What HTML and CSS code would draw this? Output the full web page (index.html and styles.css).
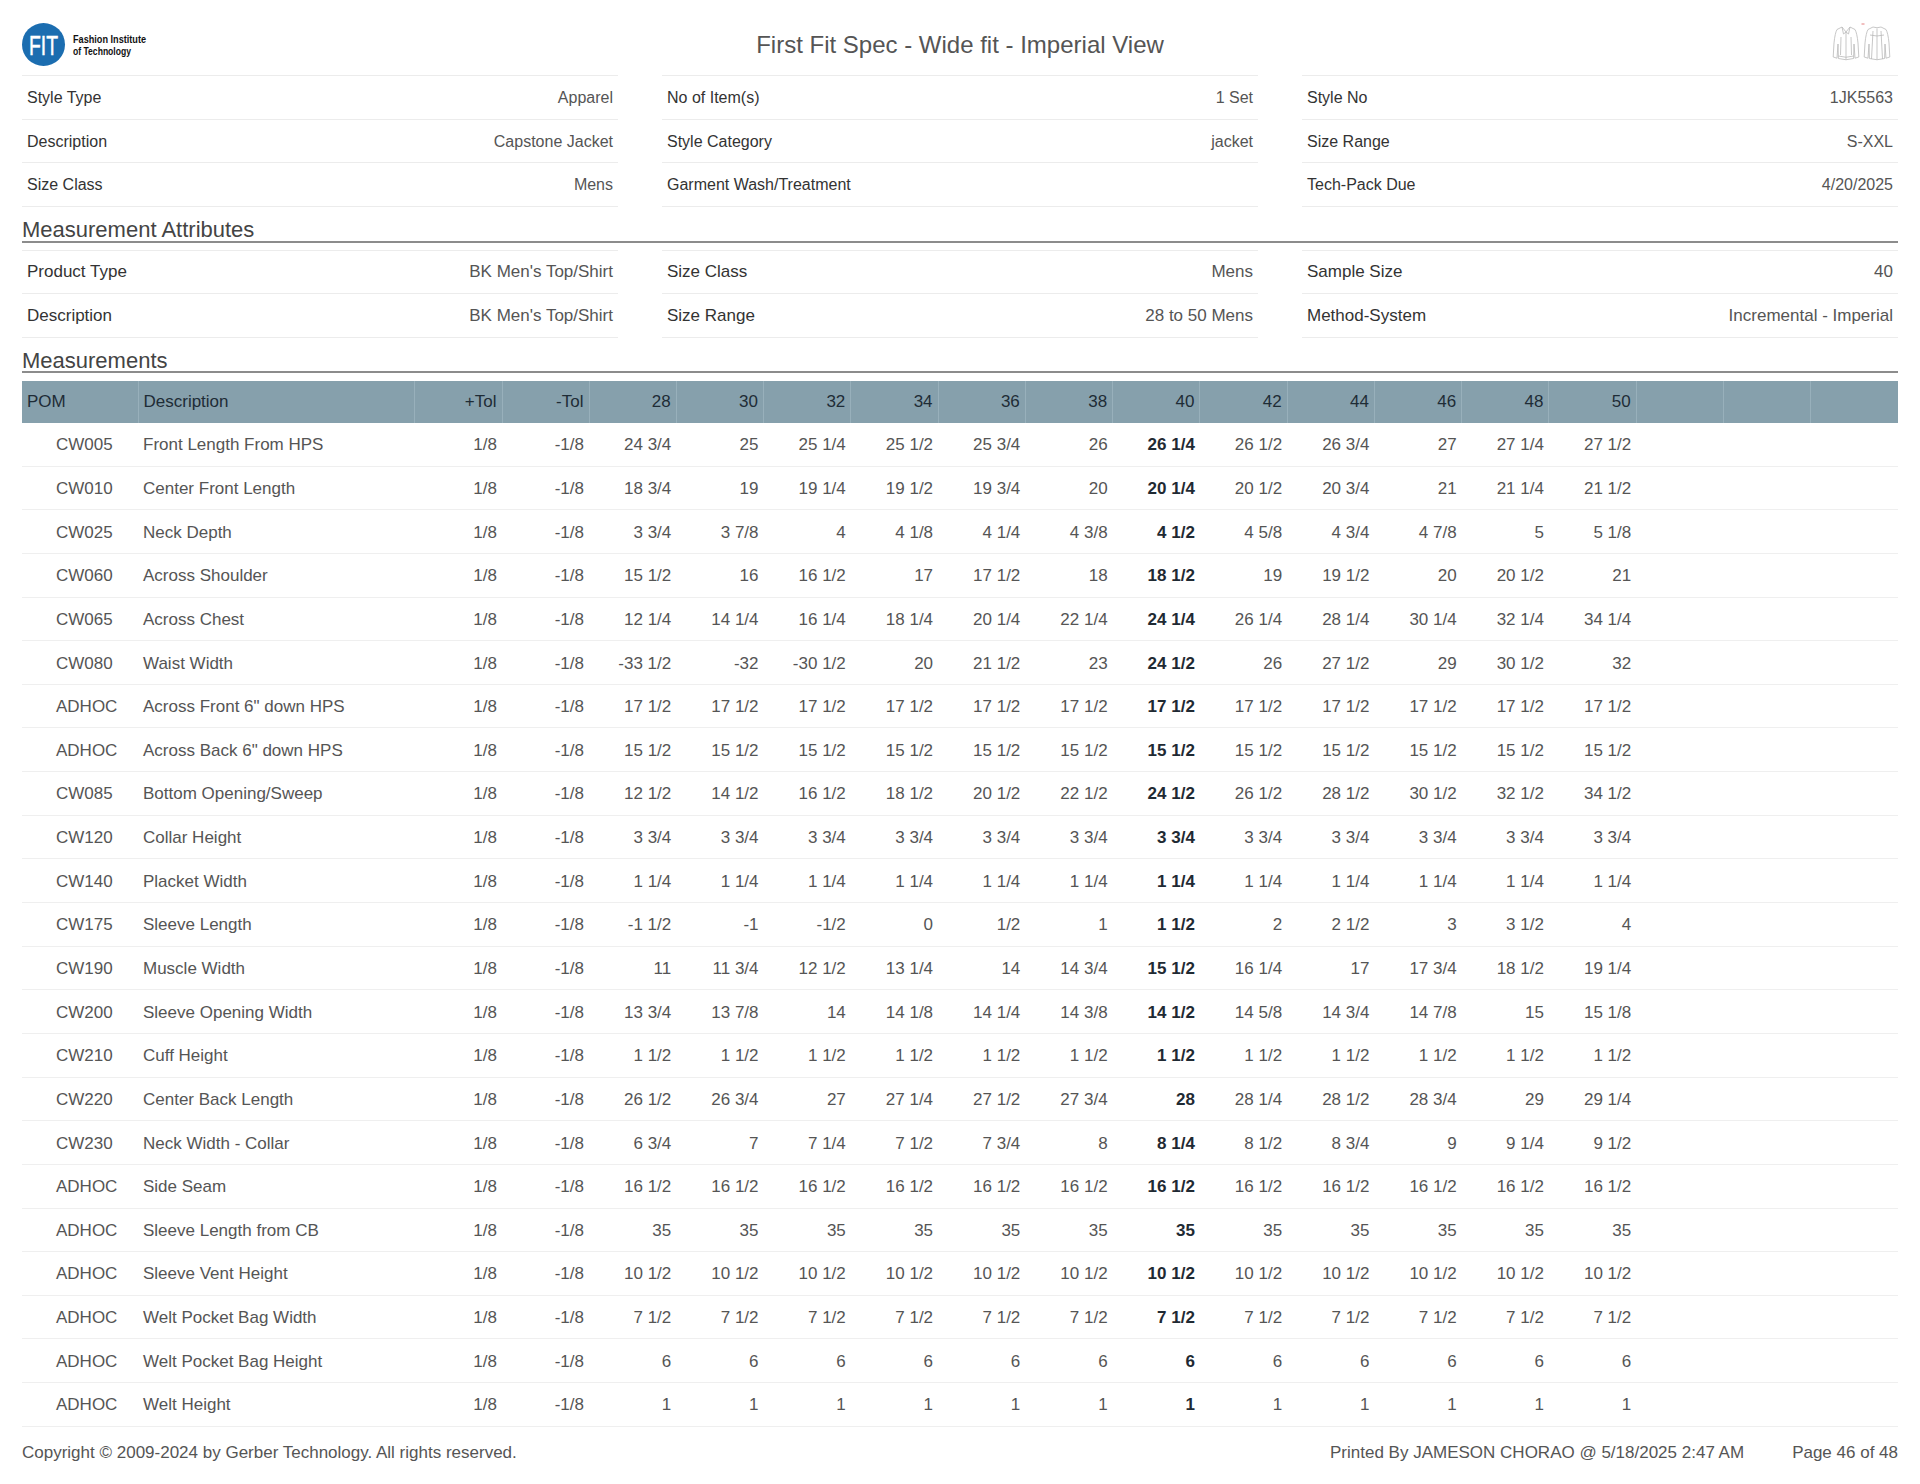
FILE: index.html
```html
<!DOCTYPE html>
<html lang="en">
<head>
<meta charset="utf-8">
<title>First Fit Spec - Wide fit - Imperial View</title>
<link rel="stylesheet" href="styles.css">
</head>
<body>
<div class="page">
  <header class="top">
    <div class="logo">
      <svg width="150" height="46" viewBox="0 0 150 46">
        <circle cx="21.5" cy="22.5" r="21.5" fill="#1b6db0"/>
        <text x="7" y="32.5" fill="#fff" stroke="#fff" stroke-width="0.5" font-family="Liberation Sans, Arial, sans-serif" font-size="28" textLength="29" lengthAdjust="spacingAndGlyphs">FIT</text>
        <text x="51" y="21" fill="#111" font-family="Liberation Sans, Arial, sans-serif" font-weight="bold" font-size="10.5" textLength="73" lengthAdjust="spacingAndGlyphs">Fashion Institute</text>
        <text x="51" y="32.5" fill="#111" font-family="Liberation Sans, Arial, sans-serif" font-weight="bold" font-size="10.5" textLength="58" lengthAdjust="spacingAndGlyphs">of Technology</text>
      </svg>
    </div>
    <h1 class="title">First Fit Spec - Wide fit - Imperial View</h1>
    <div class="sketch">
      <svg width="64" height="40" viewBox="0 0 64 40" fill="none" stroke="#b9b9b9" stroke-width="0.8" stroke-linejoin="round">
        <path d="M10 5 L5 7.5 Q3 11 2 21 L1.2 35 L5 36.2 L6 22 L6.4 36.5 Q14 39 21.6 36.5 L22 22 L23 36.2 L26.8 35 L26 21 Q25 11 23 7.5 L18 5"/>
        <path d="M10 5 L14 10 L18 5 M10 5 L11.5 12 L14 10 L16.5 12 L18 5 M14 10 L14 37.5 M9 15 L8.5 33 M19 15 L19.5 33 M6.4 34 Q14 36.5 21.6 34"/>
        <path d="M41 5 L36 7.5 Q34 11 33 21 L32.2 35 L36 36.2 L37 22 L37.4 36.5 Q45 39 52.6 36.5 L53 22 L54 36.2 L57.8 35 L57 21 Q56 11 54 7.5 L49 5 Q45 6.5 41 5"/>
        <path d="M45 6.5 L45 37.5 M41 9 L39.5 37 M49 9 L50.5 37 M38 13 Q45 15 52 13"/>
        <path d="M29.5 2 L32.5 2" stroke="#e07070" stroke-width="0.9"/>
      </svg>
    </div>
  </header>

  <section class="info">
    <div class="col">
      <div class="kv"><span class="k">Style Type</span><span class="v">Apparel</span></div>
      <div class="kv"><span class="k">Description</span><span class="v">Capstone Jacket</span></div>
      <div class="kv"><span class="k">Size Class</span><span class="v">Mens</span></div>
    </div>
    <div class="col">
      <div class="kv"><span class="k">No of Item(s)</span><span class="v">1 Set</span></div>
      <div class="kv"><span class="k">Style Category</span><span class="v">jacket</span></div>
      <div class="kv"><span class="k">Garment Wash/Treatment</span><span class="v"></span></div>
    </div>
    <div class="col">
      <div class="kv"><span class="k">Style No</span><span class="v">1JK5563</span></div>
      <div class="kv"><span class="k">Size Range</span><span class="v">S-XXL</span></div>
      <div class="kv"><span class="k">Tech-Pack Due</span><span class="v">4/20/2025</span></div>
    </div>
  </section>

  <h2 class="sec">Measurement Attributes</h2>

  <section class="info attrs">
    <div class="col">
      <div class="kv"><span class="k">Product Type</span><span class="v">BK Men's Top/Shirt</span></div>
      <div class="kv"><span class="k">Description</span><span class="v">BK Men's Top/Shirt</span></div>
    </div>
    <div class="col">
      <div class="kv"><span class="k">Size Class</span><span class="v">Mens</span></div>
      <div class="kv"><span class="k">Size Range</span><span class="v">28 to 50 Mens</span></div>
    </div>
    <div class="col">
      <div class="kv"><span class="k">Sample Size</span><span class="v">40</span></div>
      <div class="kv"><span class="k">Method-System</span><span class="v">Incremental - Imperial</span></div>
    </div>
  </section>

  <h2 class="sec sec2">Measurements</h2>

  <table class="meas">
    <colgroup>
      <col class="c-pom"><col class="c-desc"><col class="c-tol"><col class="c-tol2">
      <col class="c-sz"><col class="c-sz"><col class="c-sz"><col class="c-sz"><col class="c-sz">
      <col class="c-sz"><col class="c-sz"><col class="c-sz"><col class="c-sz"><col class="c-sz">
      <col class="c-sz"><col class="c-sz"><col class="c-sz"><col class="c-sz"><col class="c-sz">
    </colgroup>
    <thead>
      <tr>
        <th class="l">POM</th><th class="l">Description</th><th>+Tol</th><th>-Tol</th>
        <th>28</th><th>30</th><th>32</th><th>34</th><th>36</th><th>38</th><th>40</th><th>42</th><th>44</th><th>46</th><th>48</th><th>50</th><th></th><th></th><th></th>
      </tr>
    </thead>
    <tbody>
      <tr><td class="pom">CW005</td><td class="desc">Front Length From HPS</td><td>1/8</td><td>-1/8</td><td>24 3/4</td><td>25</td><td>25 1/4</td><td>25 1/2</td><td>25 3/4</td><td>26</td><td class="b">26 1/4</td><td>26 1/2</td><td>26 3/4</td><td>27</td><td>27 1/4</td><td>27 1/2</td><td></td><td></td><td></td></tr>
      <tr><td class="pom">CW010</td><td class="desc">Center Front Length</td><td>1/8</td><td>-1/8</td><td>18 3/4</td><td>19</td><td>19 1/4</td><td>19 1/2</td><td>19 3/4</td><td>20</td><td class="b">20 1/4</td><td>20 1/2</td><td>20 3/4</td><td>21</td><td>21 1/4</td><td>21 1/2</td><td></td><td></td><td></td></tr>
      <tr><td class="pom">CW025</td><td class="desc">Neck Depth</td><td>1/8</td><td>-1/8</td><td>3 3/4</td><td>3 7/8</td><td>4</td><td>4 1/8</td><td>4 1/4</td><td>4 3/8</td><td class="b">4 1/2</td><td>4 5/8</td><td>4 3/4</td><td>4 7/8</td><td>5</td><td>5 1/8</td><td></td><td></td><td></td></tr>
      <tr><td class="pom">CW060</td><td class="desc">Across Shoulder</td><td>1/8</td><td>-1/8</td><td>15 1/2</td><td>16</td><td>16 1/2</td><td>17</td><td>17 1/2</td><td>18</td><td class="b">18 1/2</td><td>19</td><td>19 1/2</td><td>20</td><td>20 1/2</td><td>21</td><td></td><td></td><td></td></tr>
      <tr><td class="pom">CW065</td><td class="desc">Across Chest</td><td>1/8</td><td>-1/8</td><td>12 1/4</td><td>14 1/4</td><td>16 1/4</td><td>18 1/4</td><td>20 1/4</td><td>22 1/4</td><td class="b">24 1/4</td><td>26 1/4</td><td>28 1/4</td><td>30 1/4</td><td>32 1/4</td><td>34 1/4</td><td></td><td></td><td></td></tr>
      <tr><td class="pom">CW080</td><td class="desc">Waist Width</td><td>1/8</td><td>-1/8</td><td>-33 1/2</td><td>-32</td><td>-30 1/2</td><td>20</td><td>21 1/2</td><td>23</td><td class="b">24 1/2</td><td>26</td><td>27 1/2</td><td>29</td><td>30 1/2</td><td>32</td><td></td><td></td><td></td></tr>
      <tr><td class="pom">ADHOC</td><td class="desc">Across Front 6" down HPS</td><td>1/8</td><td>-1/8</td><td>17 1/2</td><td>17 1/2</td><td>17 1/2</td><td>17 1/2</td><td>17 1/2</td><td>17 1/2</td><td class="b">17 1/2</td><td>17 1/2</td><td>17 1/2</td><td>17 1/2</td><td>17 1/2</td><td>17 1/2</td><td></td><td></td><td></td></tr>
      <tr><td class="pom">ADHOC</td><td class="desc">Across Back 6" down HPS</td><td>1/8</td><td>-1/8</td><td>15 1/2</td><td>15 1/2</td><td>15 1/2</td><td>15 1/2</td><td>15 1/2</td><td>15 1/2</td><td class="b">15 1/2</td><td>15 1/2</td><td>15 1/2</td><td>15 1/2</td><td>15 1/2</td><td>15 1/2</td><td></td><td></td><td></td></tr>
      <tr><td class="pom">CW085</td><td class="desc">Bottom Opening/Sweep</td><td>1/8</td><td>-1/8</td><td>12 1/2</td><td>14 1/2</td><td>16 1/2</td><td>18 1/2</td><td>20 1/2</td><td>22 1/2</td><td class="b">24 1/2</td><td>26 1/2</td><td>28 1/2</td><td>30 1/2</td><td>32 1/2</td><td>34 1/2</td><td></td><td></td><td></td></tr>
      <tr><td class="pom">CW120</td><td class="desc">Collar Height</td><td>1/8</td><td>-1/8</td><td>3 3/4</td><td>3 3/4</td><td>3 3/4</td><td>3 3/4</td><td>3 3/4</td><td>3 3/4</td><td class="b">3 3/4</td><td>3 3/4</td><td>3 3/4</td><td>3 3/4</td><td>3 3/4</td><td>3 3/4</td><td></td><td></td><td></td></tr>
      <tr><td class="pom">CW140</td><td class="desc">Placket Width</td><td>1/8</td><td>-1/8</td><td>1 1/4</td><td>1 1/4</td><td>1 1/4</td><td>1 1/4</td><td>1 1/4</td><td>1 1/4</td><td class="b">1 1/4</td><td>1 1/4</td><td>1 1/4</td><td>1 1/4</td><td>1 1/4</td><td>1 1/4</td><td></td><td></td><td></td></tr>
      <tr><td class="pom">CW175</td><td class="desc">Sleeve Length</td><td>1/8</td><td>-1/8</td><td>-1 1/2</td><td>-1</td><td>-1/2</td><td>0</td><td>1/2</td><td>1</td><td class="b">1 1/2</td><td>2</td><td>2 1/2</td><td>3</td><td>3 1/2</td><td>4</td><td></td><td></td><td></td></tr>
      <tr><td class="pom">CW190</td><td class="desc">Muscle Width</td><td>1/8</td><td>-1/8</td><td>11</td><td>11 3/4</td><td>12 1/2</td><td>13 1/4</td><td>14</td><td>14 3/4</td><td class="b">15 1/2</td><td>16 1/4</td><td>17</td><td>17 3/4</td><td>18 1/2</td><td>19 1/4</td><td></td><td></td><td></td></tr>
      <tr><td class="pom">CW200</td><td class="desc">Sleeve Opening Width</td><td>1/8</td><td>-1/8</td><td>13 3/4</td><td>13 7/8</td><td>14</td><td>14 1/8</td><td>14 1/4</td><td>14 3/8</td><td class="b">14 1/2</td><td>14 5/8</td><td>14 3/4</td><td>14 7/8</td><td>15</td><td>15 1/8</td><td></td><td></td><td></td></tr>
      <tr><td class="pom">CW210</td><td class="desc">Cuff Height</td><td>1/8</td><td>-1/8</td><td>1 1/2</td><td>1 1/2</td><td>1 1/2</td><td>1 1/2</td><td>1 1/2</td><td>1 1/2</td><td class="b">1 1/2</td><td>1 1/2</td><td>1 1/2</td><td>1 1/2</td><td>1 1/2</td><td>1 1/2</td><td></td><td></td><td></td></tr>
      <tr><td class="pom">CW220</td><td class="desc">Center Back Length</td><td>1/8</td><td>-1/8</td><td>26 1/2</td><td>26 3/4</td><td>27</td><td>27 1/4</td><td>27 1/2</td><td>27 3/4</td><td class="b">28</td><td>28 1/4</td><td>28 1/2</td><td>28 3/4</td><td>29</td><td>29 1/4</td><td></td><td></td><td></td></tr>
      <tr><td class="pom">CW230</td><td class="desc">Neck Width - Collar</td><td>1/8</td><td>-1/8</td><td>6 3/4</td><td>7</td><td>7 1/4</td><td>7 1/2</td><td>7 3/4</td><td>8</td><td class="b">8 1/4</td><td>8 1/2</td><td>8 3/4</td><td>9</td><td>9 1/4</td><td>9 1/2</td><td></td><td></td><td></td></tr>
      <tr><td class="pom">ADHOC</td><td class="desc">Side Seam</td><td>1/8</td><td>-1/8</td><td>16 1/2</td><td>16 1/2</td><td>16 1/2</td><td>16 1/2</td><td>16 1/2</td><td>16 1/2</td><td class="b">16 1/2</td><td>16 1/2</td><td>16 1/2</td><td>16 1/2</td><td>16 1/2</td><td>16 1/2</td><td></td><td></td><td></td></tr>
      <tr><td class="pom">ADHOC</td><td class="desc">Sleeve Length from CB</td><td>1/8</td><td>-1/8</td><td>35</td><td>35</td><td>35</td><td>35</td><td>35</td><td>35</td><td class="b">35</td><td>35</td><td>35</td><td>35</td><td>35</td><td>35</td><td></td><td></td><td></td></tr>
      <tr><td class="pom">ADHOC</td><td class="desc">Sleeve Vent Height</td><td>1/8</td><td>-1/8</td><td>10 1/2</td><td>10 1/2</td><td>10 1/2</td><td>10 1/2</td><td>10 1/2</td><td>10 1/2</td><td class="b">10 1/2</td><td>10 1/2</td><td>10 1/2</td><td>10 1/2</td><td>10 1/2</td><td>10 1/2</td><td></td><td></td><td></td></tr>
      <tr><td class="pom">ADHOC</td><td class="desc">Welt Pocket Bag Width</td><td>1/8</td><td>-1/8</td><td>7 1/2</td><td>7 1/2</td><td>7 1/2</td><td>7 1/2</td><td>7 1/2</td><td>7 1/2</td><td class="b">7 1/2</td><td>7 1/2</td><td>7 1/2</td><td>7 1/2</td><td>7 1/2</td><td>7 1/2</td><td></td><td></td><td></td></tr>
      <tr><td class="pom">ADHOC</td><td class="desc">Welt Pocket Bag Height</td><td>1/8</td><td>-1/8</td><td>6</td><td>6</td><td>6</td><td>6</td><td>6</td><td>6</td><td class="b">6</td><td>6</td><td>6</td><td>6</td><td>6</td><td>6</td><td></td><td></td><td></td></tr>
      <tr><td class="pom">ADHOC</td><td class="desc">Welt Height</td><td>1/8</td><td>-1/8</td><td>1</td><td>1</td><td>1</td><td>1</td><td>1</td><td>1</td><td class="b">1</td><td>1</td><td>1</td><td>1</td><td>1</td><td>1</td><td></td><td></td><td></td></tr>
    </tbody>
  </table>

  <footer class="foot">
    <span>Copyright © 2009-2024 by Gerber Technology. All rights reserved.</span>
    <span class="foot-r"><span>Printed By JAMESON CHORAO @ 5/18/2025 2:47 AM</span><span>Page 46 of 48</span></span>
  </footer>
</div>
</body>
</html>
```

FILE: styles.css
```css
html, body {
  margin: 0;
  padding: 0;
  background: #ffffff;
}

body {
  font-family: "Liberation Sans", Arial, sans-serif;
  color: #555555;
}

.page {
  padding: 0 22px;
}

/* ---------- header ---------- */
.top {
  display: grid;
  grid-template-columns: 1fr auto 1fr;
  align-items: start;
  height: 75px;
  box-sizing: border-box;
  padding-top: 22px;
}

.logo svg {
  display: block;
}

.title {
  margin: 7px 0 0 0;
  font-size: 24px;
  line-height: 32px;
  font-weight: normal;
  color: #555555;
  white-space: nowrap;
}

.sketch {
  justify-self: end;
  margin-right: 2px;
}

.sketch svg {
  display: block;
}

/* ---------- key/value grid ---------- */
.info {
  display: grid;
  grid-template-columns: repeat(3, 1fr);
  column-gap: 44px;
}

.col {
  border-bottom: 1px solid #ececec;
}

.kv {
  display: flex;
  justify-content: space-between;
  align-items: center;
  box-sizing: border-box;
  height: 43.5px;
  padding: 2px 5px 0 5px;
  border-top: 1px solid #ececec;
  font-size: 16px;
}

.kv .k {
  color: #333333;
}

.kv .v {
  color: #555555;
}

.attrs {
  margin-top: 7px;
}

.attrs .kv {
  font-size: 17px;
  padding-top: 1px;
}

/* ---------- section headings ---------- */
.sec {
  margin: 0;
  padding-top: 11px;
  font-size: 22px;
  line-height: 23px;
  font-weight: normal;
  color: #444444;
  border-bottom: 2px solid #8c8c8c;
}

.sec2 {
  padding-top: 12px;
  line-height: 21px;
}

/* ---------- measurement table ---------- */
.meas {
  width: 100%;
  margin-top: 8px;
  border-collapse: collapse;
  table-layout: fixed;
  font-size: 17px;
}

.c-pom { width: 116px; }
.c-desc { width: 276px; }
.c-tol { width: 88px; }
.c-tol2 { width: 87px; }

.meas thead tr {
  height: 42px;
  background: #86a0ac;
}

.meas th {
  padding: 0 5px;
  font-weight: normal;
  text-align: right;
  color: #1e2c36;
  border-left: 1px solid #98b0bb;
  white-space: nowrap;
}

.meas th:first-child {
  border-left: none;
}

.meas th.l {
  text-align: left;
}

.meas tbody tr {
  height: 43.65px;
  border-bottom: 1px solid #efefef;
}

.meas td {
  padding: 2px 5px 0 5px;
  text-align: right;
  color: #555555;
  white-space: nowrap;
}

.meas td.pom {
  text-align: left;
  padding-left: 34px;
}

.meas td.desc {
  text-align: left;
}

.meas td.b {
  font-weight: bold;
  color: #1f2a33;
}

/* ---------- footer ---------- */
.foot {
  display: flex;
  justify-content: space-between;
  margin-top: 16px;
  font-size: 17px;
  line-height: 20px;
  color: #555555;
}

.foot-r {
  display: flex;
  gap: 48px;
}
```
